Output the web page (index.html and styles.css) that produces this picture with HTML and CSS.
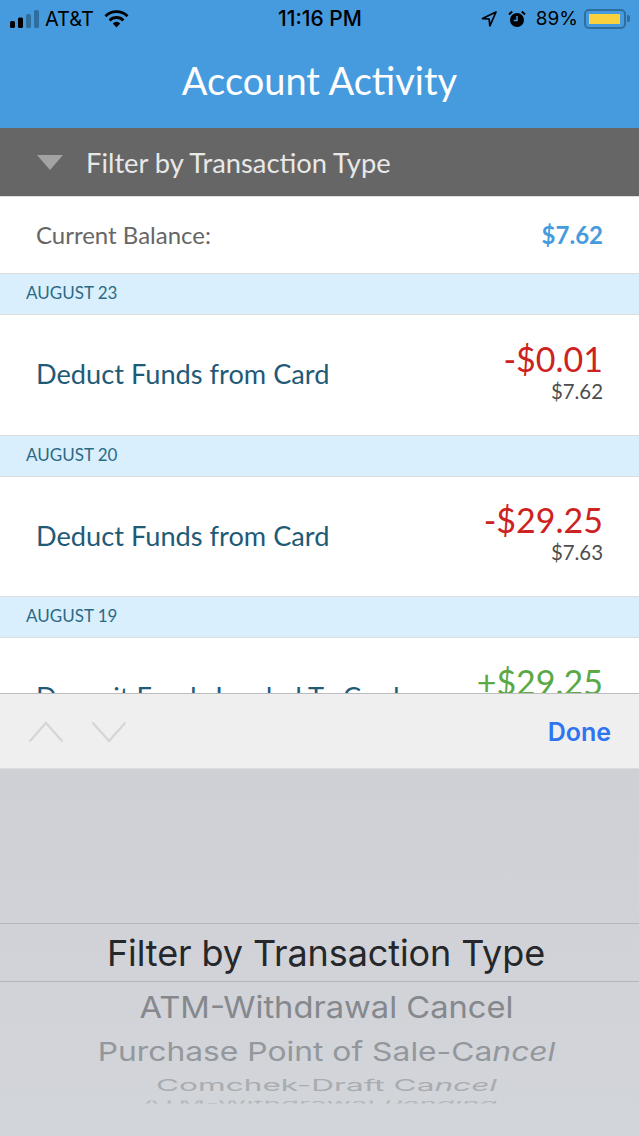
FILE: index.html
```html
<!DOCTYPE html>
<html>
  <head>
    <title>Account Activity</title>
    <link rel="stylesheet" href="styles.css">
  </head>
  <body>
    <div class="screen">
      <header class="header">
        <div class="status-bar">
          <div class="status-left">
            <svg class="signal" width="29" height="18" viewBox="0 0 29 18">
              <rect x="0" y="11" width="5" height="7" rx="1.5" fill="#000"/>
              <rect x="8" y="7.5" width="5" height="10.5" rx="1.5" fill="#000"/>
              <rect x="16" y="4" width="5" height="14" rx="1.5" fill="#2f6f9f"/>
              <rect x="24" y="0" width="5" height="18" rx="1.5" fill="#2f6f9f"/>
            </svg>
            <span>AT&amp;T</span>
            <svg class="wifi" width="25" height="18" viewBox="0 0 25 18">
              <path d="M1.5 6.2a15.5 15.500 0 0 1 22 0" fill="none" stroke="#000" stroke-width="2.8"/>
              <path d="M5.6 10.4a9.7 9.7 0 0 1 13.8 0" fill="none" stroke="#000" stroke-width="2.8"/>
              <path d="M8.8 13.4a5.2 5.2 0 0 1 7.4 0L12.5 17.6z" fill="#000"/>
            </svg>
          </div>
          <div class="status-time">11:16 PM</div>
          <div class="status-right">
            <svg class="arrow" width="16" height="16" viewBox="0 0 16 16">
              <path d="M15 1 1.5 7.6l6.6.4.8 6.8z" fill="none" stroke="#000" stroke-width="1.7" stroke-linejoin="round"/>
            </svg>
            <svg class="alarm" width="18" height="18" viewBox="0 0 18 18">
              <circle cx="9" cy="10" r="7" fill="#000"/>
              <path d="M9 6v4.5H5.8" fill="none" stroke="#469bde" stroke-width="1.5"/>
              <path d="M1 4.5 4.2 1.6M17 4.5l-3.2-2.9" stroke="#000" stroke-width="2"/>
            </svg>
            <span class="percent">89%</span>
            <div class="battery">
              <div class="battery-level"></div>
            </div>
            <div class="battery-tip"></div>
          </div>
        </div>
        <h1 class="title">Account Activity</h1>
      </header>

      <div class="filter-bar">
        <span class="filter-caret"></span>
        <span>Filter by Transaction Type</span>
      </div>

      <main class="activity">
        <div class="balance">
          <span>Current Balance:</span>
          <strong>$7.62</strong>
        </div>

        <div class="date">AUGUST 23</div>
        <div class="row">
          <div class="row-name">Deduct Funds from Card</div>
          <div class="row-amounts">
            <div class="amount minus">-$0.01</div>
            <div class="running">$7.62</div>
          </div>
        </div>

        <div class="date">AUGUST 20</div>
        <div class="row">
          <div class="row-name">Deduct Funds from Card</div>
          <div class="row-amounts">
            <div class="amount minus">-$29.25</div>
            <div class="running">$7.63</div>
          </div>
        </div>

        <div class="date">AUGUST 19</div>
        <div class="row">
          <div class="row-name">Deposit Funds Loaded To Card</div>
          <div class="row-amounts">
            <div class="amount plus">+$29.25</div>
            <div class="running"></div>
          </div>
        </div>
      </main>

      <div class="toolbar">
        <div class="toolbar-arrows">
          <svg width="36" height="22" viewBox="0 0 36 22">
            <path d="M1.5 20.5 18 2l16.500 18.500" fill="none" stroke="#d6d6d6" stroke-width="2.200"/>
          </svg>
          <svg width="36" height="22" viewBox="0 0 36 22">
            <path d="M1.500 1.500 18 20 34.500 1.500" fill="none" stroke="#d6d6d6" stroke-width="2.200"/>
          </svg>
        </div>
        <span class="done">Done</span>
      </div>

      <div class="picker">
        <div class="picker-selected">Filter by Transaction Type</div>
        <div class="picker-item item-1">ATM-Withdrawal Cancel</div>
        <div class="picker-item item-2">Purchase Point of Sale-Ca<em>ncel</em></div>
        <div class="picker-item item-3">Comchek-Draft Ca<em>ncel</em></div>
        <div class="picker-item item-4">ATM-Withdrawal <em>Pending</em></div>
      </div>
    </div>
  </body>
</html>
```

FILE: styles.css
```css
* {
  box-sizing: border-box;
}

body {
  margin: 0;
  font-family: Lato, Arial, sans-serif;
  background-color: #fff;
}

.screen {
  width: 639px;
  height: 1136px;
  display: flex;
  flex-direction: column;
  overflow: hidden;
}

/* header */
.header {
  height: 128px;
  flex: none;
  background-color: #469bde;
  color: #fff;
}

.status-bar {
  height: 37px;
  padding: 0 9px 0 10px;
  display: grid;
  grid-template-columns: 1fr auto 1fr;
  align-items: center;
  color: #000;
  font-family: Inter, Arial, sans-serif;
  font-size: 19px;
}

.status-left,
.status-right {
  display: flex;
  align-items: center;
}

.status-left span {
  margin-left: 6px;
  font-size: 20px;
}

.wifi {
  margin-left: 10px;
}

.status-time {
  font-size: 21px;
  font-weight: 500;
}

.status-right {
  justify-content: flex-end;
}

.alarm {
  margin-left: 11px;
}

.percent {
  margin-left: 10px;
}

.battery {
  width: 42px;
  height: 20px;
  margin-left: 6px;
  padding: 3px;
  border: 2px solid #2f6f9f;
  border-radius: 5px;
}

.battery-level {
  width: 31px;
  height: 100%;
  background-color: #fbd03f;
}

.battery-tip {
  width: 3px;
  height: 7px;
  margin-left: 1px;
  background-color: #2f6f9f;
  border-radius: 0 2px 2px 0;
}

.title {
  margin: 0;
  padding-top: 21px;
  font-size: 38px;
  font-weight: 400;
  line-height: 44px;
  text-align: center;
}

/* filter */
.filter-bar {
  height: 69px;
  flex: none;
  padding-left: 37px;
  display: flex;
  align-items: center;
  background-color: #666;
  border-bottom: 1px solid #ddd;
  color: #e8e8e8;
  font-size: 27.3px;
}

.filter-caret {
  width: 0;
  height: 0;
  margin-right: 23px;
  border-left: 13px solid transparent;
  border-right: 13px solid transparent;
  border-top: 15px solid #a3a3a3;
}

/* list */
.activity {
  flex: 1;
  min-height: 0;
  overflow: hidden;
}

.balance {
  height: 76px;
  padding: 0 36px 2px;
  display: flex;
  justify-content: space-between;
  align-items: center;
  color: #666;
  font-size: 24px;
}

.balance strong {
  color: #469bde;
  font-size: 24px;
}

.date {
  height: 42px;
  padding: 0 0 3px 26px;
  display: flex;
  align-items: center;
  background-color: #d9effd;
  border-top: 1px solid #ddd;
  border-bottom: 1px solid #ddd;
  color: #2d6a84;
  font-size: 17px;
}

.row {
  height: 119.5px;
  padding: 0 36px 2px;
  display: flex;
  justify-content: space-between;
  align-items: center;
  background-color: #fff;
}

.row-name {
  color: #1f5a77;
  font-size: 27.2px;
}

.row-amounts {
  margin-bottom: 6px;
  text-align: right;
}

.amount {
  font-size: 34px;
  line-height: 40px;
}

.minus {
  color: #cd2320;
}

.plus {
  color: #5aa846;
}

.running {
  min-height: 24px;
  color: #4d4d4d;
  font-size: 20.4px;
  line-height: 24px;
}

/* keyboard accessory */
.toolbar {
  height: 76px;
  flex: none;
  padding: 2px 28px 0;
  display: flex;
  justify-content: space-between;
  align-items: center;
  background-color: #efefef;
  border-top: 1px solid #bdbdbd;
  border-bottom: 1px solid #dcdcdc;
}

.toolbar-arrows {
  display: flex;
  gap: 27px;
}

.done {
  color: #2f74f0;
  font-family: Inter, Arial, sans-serif;
  font-size: 25px;
  font-weight: 600;
}

/* picker wheel */
.picker {
  height: 367px;
  flex: none;
  padding-top: 154px;
  background: linear-gradient(#cfd0d5, #d2d5da);
  font-family: Inter, Arial, sans-serif;
  text-align: center;
  white-space: nowrap;
  overflow: hidden;
}

.picker-selected {
  height: 59px;
  margin-bottom: 4px;
  padding-left: 13px;
  border-top: 1px solid #b5b7bb;
  border-bottom: 1px solid #b5b7bb;
  color: #25272a;
  font-size: 36px;
  letter-spacing: -0.1px;
  line-height: 58px;
}

.picker-item {
  padding-left: 14px;
  color: #85888c;
}

.item-1 {
  height: 44px;
  font-size: 32.7px;
  line-height: 42px;
  transform: scaleY(0.93);
}

.item-2 {
  height: 44px;
  color: #94979b;
  font-size: 31.800px;
  line-height: 44px;
  transform: scaleY(0.82);
}

.item-3 {
  height: 24px;
  color: #a9acb0;
  font-size: 31.600px;
  line-height: 22px;
  transform: scaleY(0.52);
}

.item-4 {
  height: 8px;
  padding-left: 0;
  color: #b4b7bb;
  font-size: 29.600px;
  line-height: 16px;
  overflow: hidden;
  transform: scaleY(0.4);
}
```
